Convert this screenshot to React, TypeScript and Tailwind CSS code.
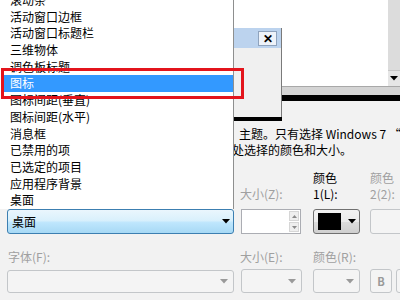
import React from "react";

const items = [
  "滚动条",
  "活动窗口边框",
  "活动窗口标题栏",
  "三维物体",
  "调色板标题",
  "图标",
  "图标间距(垂直)",
  "图标间距(水平)",
  "消息框",
  "已禁用的项",
  "已选定的项目",
  "应用程序背景",
  "桌面",
];

const Arrow = ({ color = "#000" }: { color?: string }) => (
  <svg width="8" height="5" viewBox="0 0 8 5">
    <path d="M0 0h8L4 4.5z" fill={color} />
  </svg>
);

const GrayBox = ({ w, arrow = true }: { w: string; arrow?: boolean }) => (
  <div
    className={`${w} h-full shrink-0 rounded-[3px] border border-[#c3c6c9] bg-[#f4f4f4] flex items-center justify-end pr-[5px]`}
  >
    {arrow && <Arrow color="#9a9a9a" />}
  </div>
);

const App = () => {
  return (
    <div className="relative w-[400px] h-[300px] overflow-hidden bg-[#f2f2f2] text-[12px] text-black font-['Noto_Sans_CJK_SC',sans-serif] flex">
      {/* left column */}
      <div className="w-[234px] shrink-0 flex flex-col">
        <div className="h-[209px] bg-white border-r border-[#8e8f8f] overflow-hidden">
          <div className="-mt-[8px]">
            {items.map((t) => (
              <div
                key={t}
                className={`h-[16.7px] leading-[16.7px] ml-[3px] pl-[7px] whitespace-nowrap ${
                  t === "图标" ? "bg-[#3399ff] text-white" : ""
                }`}
              >
                {t}
              </div>
            ))}
          </div>
        </div>
        <div className="ml-[7px] h-[25px] rounded-[3px] border border-[#3c7fb1] bg-[linear-gradient(#eaf6fd,#d9f0fc_45%,#bee6fd_55%,#a7d9f5)] flex items-center justify-between pl-[4px] pr-[3px]">
          <span>桌面</span>
          <Arrow />
        </div>
        <div className="mt-[15px] ml-[8px] h-[16px] leading-[16px] text-[#a0a0a0]">字体(F):</div>
        <div className="mt-[5px] ml-[7px] h-[23px]">
          <GrayBox w="w-full" />
        </div>
      </div>

      {/* right column */}
      <div className="flex-1 flex flex-col overflow-hidden">
        <div className="h-[121px] flex">
          {/* small window */}
          <div className="w-[48px] shrink-0 flex flex-col">
            <div className="h-[28px] bg-white" />
            <div className="h-[20px] bg-[#bcd3ee] border-r border-[#7a7a7a] flex items-center justify-end pr-[4px]">
              <div className="w-[19px] h-[15px] border border-[#8fa3bd] bg-[#eef3fa] flex items-center justify-center text-[12px] font-bold leading-none">
                ✕
              </div>
            </div>
            <div className="flex-1 bg-[#f0f0f0] border-r border-[#7a7a7a]" />
            <div className="h-[4px] bg-black" />
          </div>
          {/* big window */}
          <div className="flex-1 flex flex-col">
            <div className="h-[86px] bg-white flex justify-end">
              <div className="w-[12px] bg-[#dcdcdc] flex flex-col justify-end">
                <div className="h-[16px] bg-[#e6e6e6] border-t border-[#c8c8c8] flex items-center justify-center">
                  <Arrow />
                </div>
              </div>
            </div>
            <div className="h-[9px] bg-[#d4d4d4] border-t border-[#a8a8a8]" />
            <div className="h-[6px] bg-black" />
            <div className="flex-1 bg-[#f2f2f2]" />
          </div>
        </div>

        <div className="pt-[5px] leading-[16px] whitespace-nowrap">
          <div className="pl-[5px]">主题。只有选择 Windows 7 “</div>
          <div className="-ml-[2px]">处选择的颜色和大小。</div>
        </div>

        <div className="mt-[12px] flex pl-[6px] h-[16px] leading-[16px]">
          <div className="w-[73px] shrink-0" />
          <div className="w-[57px] shrink-0">颜色</div>
          <div className="text-[#a0a0a0]">颜色</div>
        </div>
        <div className="flex pl-[6px] h-[16px] leading-[16px]">
          <div className="w-[73px] shrink-0 text-[#a0a0a0]">大小(Z):</div>
          <div className="w-[57px] shrink-0">1(L):</div>
          <div className="text-[#a0a0a0]">2(2):</div>
        </div>

        <div className="mt-[7px] flex pl-[7px] h-[25px]">
          <div className="w-[60px] shrink-0 h-full border border-[#abadb3] bg-white flex justify-end p-[1px]">
            <div className="w-[10px] flex flex-col gap-[1px]">
              <div className="flex-1 bg-[#efefef] border border-[#d6d6d6] flex items-center justify-center">
                <svg width="5" height="3" viewBox="0 0 5 3">
                  <path d="M0 3h5L2.5 0z" fill="#8a8a8a" />
                </svg>
              </div>
              <div className="flex-1 bg-[#efefef] border border-[#d6d6d6] flex items-center justify-center">
                <svg width="5" height="3" viewBox="0 0 5 3">
                  <path d="M0 0h5L2.5 3z" fill="#8a8a8a" />
                </svg>
              </div>
            </div>
          </div>
          <div className="w-[12px] shrink-0" />
          <div className="w-[47px] shrink-0 h-full rounded-[3px] border border-[#707070] bg-[linear-gradient(#f2f2f2,#ebebeb_50%,#dddddd_50%,#cfcfcf)] flex items-center pl-[4px] gap-[7px]">
            <div className="w-[23px] h-[17px] bg-black" />
            <Arrow />
          </div>
          <div className="w-[10px] shrink-0" />
          <div className="w-[40px] shrink-0 h-full">
            <GrayBox w="w-full" arrow={false} />
          </div>
        </div>

        <div className="mt-[15px] flex pl-[6px] h-[16px] leading-[16px] text-[#a0a0a0]">
          <div className="w-[73px] shrink-0">大小(E):</div>
          <div>颜色(R):</div>
        </div>

        <div className="mt-[4px] flex pl-[7px] h-[24px]">
          <GrayBox w="w-[61px]" />
          <div className="w-[11px] shrink-0" />
          <GrayBox w="w-[47px]" />
          <div className="w-[10px] shrink-0" />
          <div className="w-[22px] h-full shrink-0 rounded-[3px] border border-[#c3c6c9] bg-[#f4f4f4] flex items-center justify-center font-bold text-[#9a9a9a] text-[11px]">
            B
          </div>
          <div className="w-[4px] shrink-0" />
          <div className="w-[22px] h-full shrink-0 rounded-[3px] border border-[#c3c6c9] bg-[#f4f4f4]" />
        </div>
      </div>

      {/* highlight annotation */}
      <div className="absolute left-[1px] top-[68px] w-[243px] h-[31px] border-[3px] border-[#e3141c]" />
    </div>
  );
};

export default App;
